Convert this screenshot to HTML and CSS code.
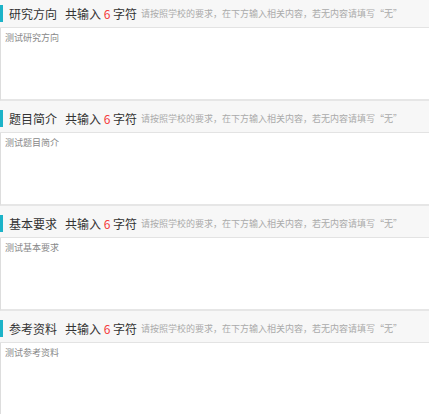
FILE: index.html
```html
<!DOCTYPE html>
<html lang="zh-CN">
<head>
  <meta charset="UTF-8">
  <meta name="viewport" content="width=device-width, initial-scale=1.0">
  <title>开题报告</title>
  <link rel="stylesheet" href="styles.css">
</head>
<body>
  <div class="section">
    <div class="section-header">
      <span class="section-title">研究方向</span>
      <span class="count">共输入 <em>6</em> 字符</span>
      <span class="hint">请按照学校的要求，在下方输入相关内容，若无内容请填写“无”</span>
    </div>
    <div class="section-body">测试研究方向</div>
  </div>

  <div class="section">
    <div class="section-header">
      <span class="section-title">题目简介</span>
      <span class="count">共输入 <em>6</em> 字符</span>
      <span class="hint">请按照学校的要求，在下方输入相关内容，若无内容请填写“无”</span>
    </div>
    <div class="section-body">测试题目简介</div>
  </div>

  <div class="section">
    <div class="section-header">
      <span class="section-title">基本要求</span>
      <span class="count">共输入 <em>6</em> 字符</span>
      <span class="hint">请按照学校的要求，在下方输入相关内容，若无内容请填写“无”</span>
    </div>
    <div class="section-body">测试基本要求</div>
  </div>

  <div class="section">
    <div class="section-header">
      <span class="section-title">参考资料</span>
      <span class="count">共输入 <em>6</em> 字符</span>
      <span class="hint">请按照学校的要求，在下方输入相关内容，若无内容请填写“无”</span>
    </div>
    <div class="section-body">测试参考资料</div>
  </div>
</body>
</html>
```

FILE: styles.css
```css
body {
  margin: 0;
  font-family: "Noto Sans CJK SC", "Liberation Sans", sans-serif;
  background-color: #f7f7f7;
  color: #333;
}

.section {
  margin-bottom: 4px;
}

.section-header {
  display: flex;
  align-items: center;
  height: 27px;
  padding-left: 9px;
  position: relative;
  background-color: #f7f7f7;
  border-bottom: 1px solid #e3e3e3;
}

.section-header::before {
  content: "";
  position: absolute;
  left: 0;
  top: 5px;
  width: 3px;
  height: 17px;
  background-color: #1cb3c8;
}

.section-title {
  font-size: 12px;
  margin-right: 8px;
}

.count {
  font-size: 12px;
  margin-right: 4px;
}

.count em {
  font-style: normal;
  color: #f43b3b;
}

.hint {
  font-size: 9px;
  color: #aaa;
}

.section-body {
  height: 65px;
  padding: 3px 4px;
  background-color: #fff;
  border-left: 1px solid #ddd;
  border-bottom: 2px solid #e6e6e6;
  font-size: 9px;
  color: #888;
}
```
